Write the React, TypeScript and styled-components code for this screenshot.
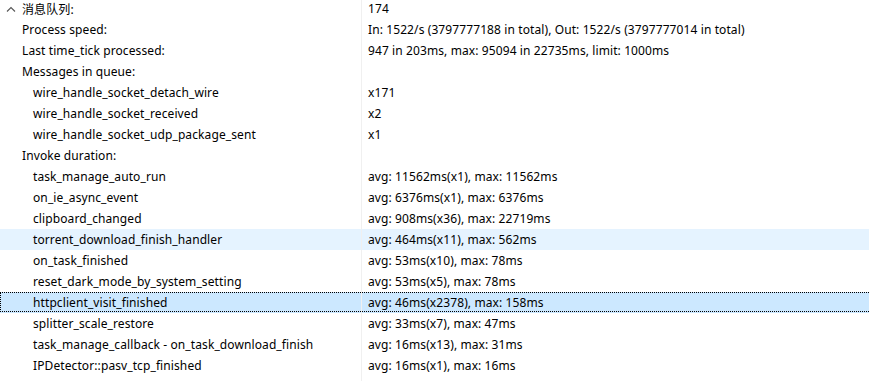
import styled, { createGlobalStyle } from "styled-components";

const GlobalStyle = createGlobalStyle`
  html, body {
    margin: 0;
    padding: 0;
    background: #ffffff;
  }
  body {
    font-family: "Noto Sans", "Noto Sans CJK SC", sans-serif;
    font-size: 12px;
    letter-spacing: 0.1px;
    color: #000;
  }
`;

const Viewport = styled.div`
  width: 869px;
  height: 381px;
  overflow: hidden;
  position: relative;
`;

const List = styled.div`
  margin-top: -2px;
  display: flex;
  flex-direction: column;
`;

type RowState = "normal" | "hover" | "selected";

const Row = styled.div<{ $state: RowState }>`
  display: grid;
  grid-template-columns: 361px 1fr;
  height: 21px;
  box-sizing: border-box;
  background: ${({ $state }) =>
    $state === "hover" ? "#e5f3ff" : $state === "selected" ? "#cce8ff" : "transparent"};
  position: relative;
  &::after {
    content: "";
    display: ${({ $state }) => ($state === "selected" ? "block" : "none")};
    position: absolute;
    inset: 0 0 1px 0;
    border: 1px dotted #000;
    border-right: none;
    pointer-events: none;
  }
`;

const LabelCell = styled.div<{ $level: number }>`
  display: flex;
  align-items: center;
  padding-left: ${({ $level }) => ($level === 2 ? 33 : 22)}px;
  white-space: nowrap;
  overflow: hidden;
  position: relative;
`;

const ValueCell = styled.div`
  display: flex;
  align-items: center;
  padding-left: 6px;
  border-left: 1px solid #f0f0f0;
  white-space: nowrap;
  overflow: hidden;
`;

const Chevron = styled.svg`
  position: absolute;
  left: 6px;
  top: 8px;
`;

type Item = { label: string; value: string; level: number; state?: RowState; root?: boolean };

const items: Item[] = [
  { label: "消息队列:", value: "174", level: 0, root: true },
  { label: "Process speed:", value: "In: 1522/s (3797777188 in total), Out: 1522/s (3797777014 in total)", level: 1 },
  { label: "Last time_tick processed:", value: "947 in 203ms, max: 95094 in 22735ms, limit: 1000ms", level: 1 },
  { label: "Messages in queue:", value: "", level: 1 },
  { label: "wire_handle_socket_detach_wire", value: "x171", level: 2 },
  { label: "wire_handle_socket_received", value: "x2", level: 2 },
  { label: "wire_handle_socket_udp_package_sent", value: "x1", level: 2 },
  { label: "Invoke duration:", value: "", level: 1 },
  { label: "task_manage_auto_run", value: "avg: 11562ms(x1), max: 11562ms", level: 2 },
  { label: "on_ie_async_event", value: "avg: 6376ms(x1), max: 6376ms", level: 2 },
  { label: "clipboard_changed", value: "avg: 908ms(x36), max: 22719ms", level: 2 },
  { label: "torrent_download_finish_handler", value: "avg: 464ms(x11), max: 562ms", level: 2, state: "hover" },
  { label: "on_task_finished", value: "avg: 53ms(x10), max: 78ms", level: 2 },
  { label: "reset_dark_mode_by_system_setting", value: "avg: 53ms(x5), max: 78ms", level: 2 },
  { label: "httpclient_visit_finished", value: "avg: 46ms(x2378), max: 158ms", level: 2, state: "selected" },
  { label: "splitter_scale_restore", value: "avg: 33ms(x7), max: 47ms", level: 2 },
  { label: "task_manage_callback - on_task_download_finish", value: "avg: 16ms(x13), max: 31ms", level: 2 },
  { label: "IPDetector::pasv_tcp_finished", value: "avg: 16ms(x1), max: 16ms", level: 2 },
  { label: "", value: "", level: 2 },
];

export default function App() {
  return (
    <Viewport>
      <GlobalStyle />
      <List>
        {items.map((item, i) => (
          <Row key={i} $state={item.state ?? "normal"}>
            <LabelCell $level={item.level}>
              {item.root && (
                <Chevron width="10" height="6" viewBox="0 0 10 6">
                  <path d="M1 5.5 L5 1.5 L9 5.5" fill="none" stroke="#555" strokeWidth="1.1" />
                </Chevron>
              )}
              {item.label}
            </LabelCell>
            <ValueCell>{item.value}</ValueCell>
          </Row>
        ))}
      </List>
    </Viewport>
  );
}
